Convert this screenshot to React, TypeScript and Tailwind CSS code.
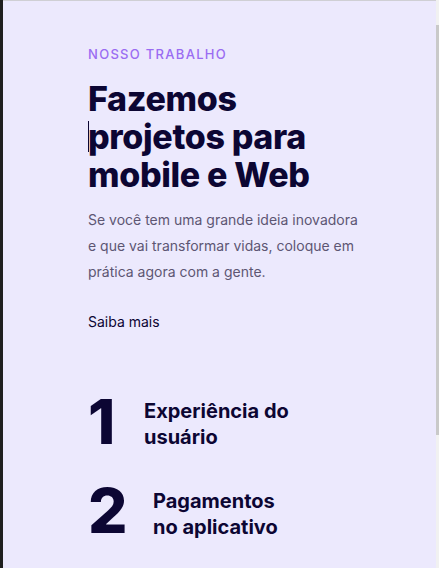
export default function App() {
  return (
    <div
      className="flex h-[568px] w-[439px] overflow-hidden bg-[#ece9fd]"
      style={{ fontFamily: 'Inter, "Noto Sans", sans-serif' }}
    >
      {/* left edge */}
      <div className="w-[3px] shrink-0 bg-[#1f1f1f]" />

      <div className="flex flex-1 flex-col border-t border-[#cfcfd4]">
        <main className="flex-1 pl-[85px] pt-[44px]">
          <p className="text-[13px] font-medium uppercase tracking-[0.1em] text-[#9a6cf2]">
            Nosso trabalho
          </p>

          <h1 className="relative mt-[15px] text-[34px] font-extrabold leading-[38px] tracking-[-0.01em] text-[#0c0633]">
            Fazemos
            <br />
            <span className="absolute left-0 top-[41px] h-[31px] w-px bg-[#0c0633]" />
            projetos para
            <br />
            mobile e Web
          </h1>

          <p className="mt-[13px] w-[280px] text-[14px] leading-[26px] text-[#5d5673]">
            Se você tem uma grande ideia inovadora e que vai transformar vidas, coloque em prática
            agora com a gente.
          </p>

          <a href="#" className="mt-[26px] block text-[14px] text-[#0c0633]">
            Saiba mais
          </a>

          <ul className="mt-[64px] flex flex-col gap-[35px]">
            <li className="flex items-start">
              <span className="w-[56px] text-[62px] font-extrabold leading-[52px] text-[#0c0633]">1</span>
              <span className="pt-[2px] text-[20px] font-bold leading-[26px] text-[#0c0633]">
                Experiência do
                <br />
                usuário
              </span>
            </li>
            <li className="flex items-start">
              <span className="w-[65px] text-[62px] font-extrabold leading-[52px] text-[#0c0633]">2</span>
              <span className="pt-[3px] text-[20px] font-bold leading-[26px] text-[#0c0633]">
                Pagamentos
                <br />
                no aplicativo
              </span>
            </li>
          </ul>
        </main>
      </div>

      {/* scrollbar */}
      <div className="flex w-[3px] shrink-0 flex-col bg-[#f1f1f1] pt-[25px]">
        <div className="h-[410px] bg-[#c9c9c9]" />
      </div>
    </div>
  )
}
